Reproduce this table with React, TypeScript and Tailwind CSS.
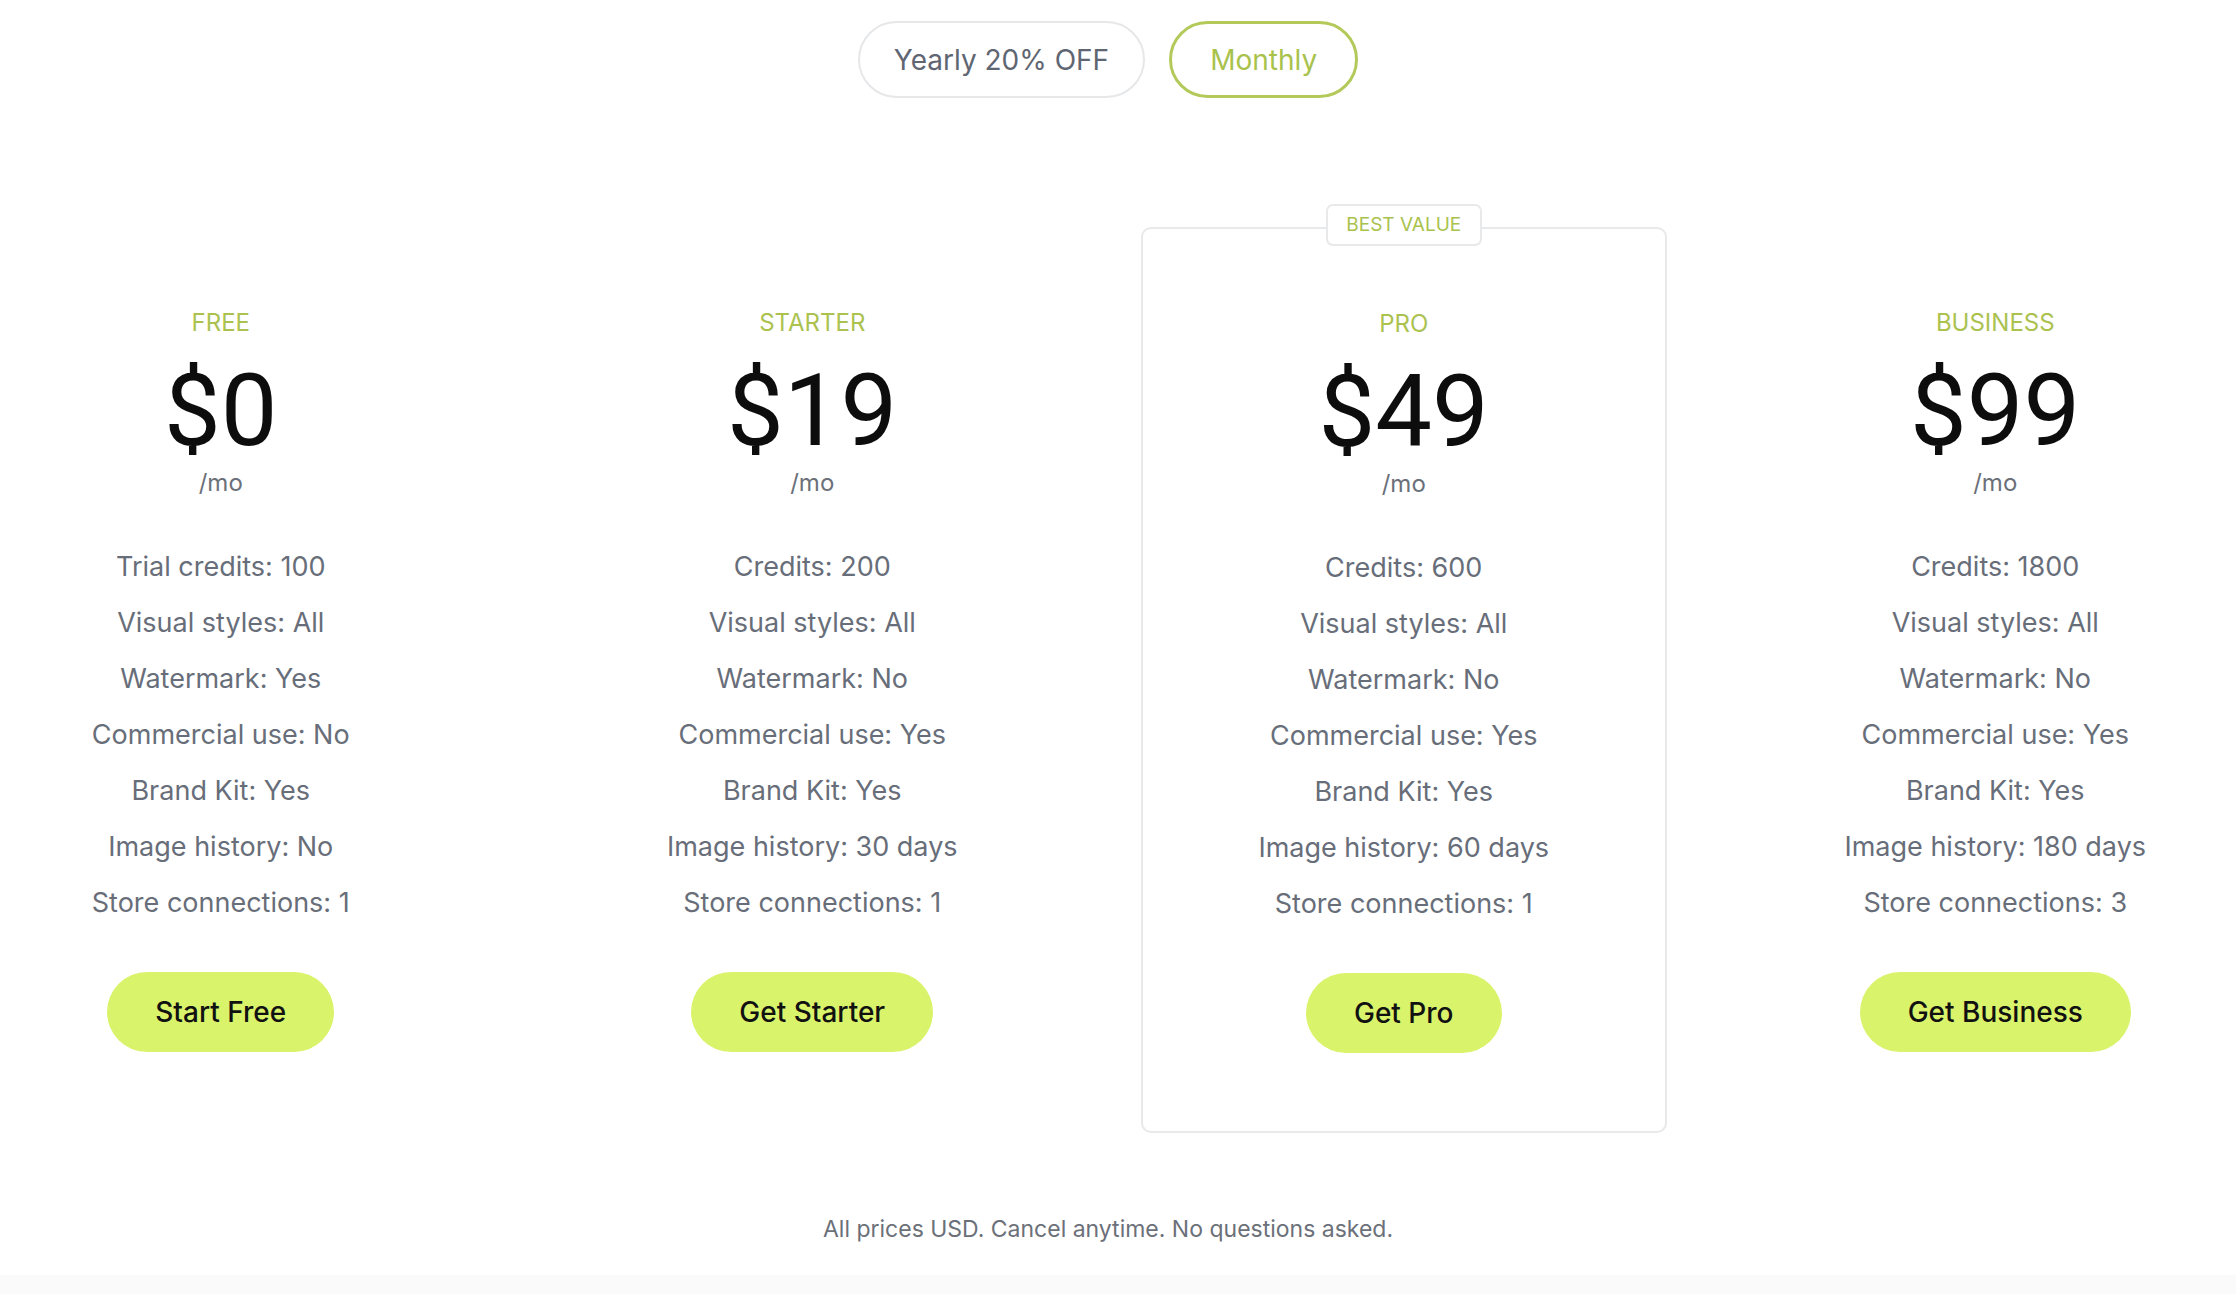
const plans = [
    {
        name: "FREE",
        price: "$0",
        cta: "Start Free",
        features: ["Trial credits: 100", "Visual styles: All", "Watermark: Yes", "Commercial use: No", "Brand Kit: Yes", "Image history: No", "Store connections: 1"],
    },
    {
        name: "STARTER",
        price: "$19",
        cta: "Get Starter",
        features: ["Credits: 200", "Visual styles: All", "Watermark: No", "Commercial use: Yes", "Brand Kit: Yes", "Image history: 30 days", "Store connections: 1"],
    },
    {
        name: "PRO",
        price: "$49",
        cta: "Get Pro",
        best: true,
        features: ["Credits: 600", "Visual styles: All", "Watermark: No", "Commercial use: Yes", "Brand Kit: Yes", "Image history: 60 days", "Store connections: 1"],
    },
    {
        name: "BUSINESS",
        price: "$99",
        cta: "Get Business",
        features: ["Credits: 1800", "Visual styles: All", "Watermark: No", "Commercial use: Yes", "Brand Kit: Yes", "Image history: 180 days", "Store connections: 3"],
    },
];

export default function App() {
    return (
        <div className="min-h-screen w-[2236px] bg-white font-['Inter',sans-serif]">
            <div className="mr-[20px] flex flex-col items-center">
                <div className="mt-[21px] flex items-center gap-[24px]">
                    <button className="h-[77px] rounded-full border-2 border-[#e6e7e9] px-[34px] text-[28px] text-[#5f6672]">
                        Yearly 20% OFF
                    </button>
                    <button className="h-[77px] rounded-full border-[3px] border-[#b3ca5b] px-[38px] text-[28px] text-[#a9c24c]">
                        Monthly
                    </button>
                </div>

                <div className="mt-[129px] grid w-full grid-cols-4 gap-x-[150px]">
                    {plans.map((p) => (
                        <PlanCard key={p.name} plan={p} />
                    ))}
                </div>

                <p className="mt-[80px] text-[23px] leading-[32px] text-[#6b7079]">
                    All prices USD. Cancel anytime. No questions asked.
                </p>
            </div>
            <div className="mt-[30px] h-[40px] bg-[#fafafa]" />
        </div>
    );
}

function PlanCard({ plan }: { plan: (typeof plans)[number] }) {
    return (
        <div
            className={
                plan.best
                    ? "relative -mx-[42px] flex flex-col items-center rounded-[10px] border-2 border-[#e8e9eb] pt-[79px] pb-[78px]"
                    : "relative flex flex-col items-center border-2 border-transparent pt-[78px] pb-[79px]"
            }
        >
            {plan.best && (
                <span className="absolute left-1/2 top-[-4px] flex h-[42px] w-[156px] -translate-x-1/2 -translate-y-1/2 items-center justify-center rounded-[7px] border-2 border-[#e8e9eb] bg-white text-[19px] text-[#a9c24c]">
                    BEST VALUE
                </span>
            )}
            <h3 className="text-[24px] leading-[32px] text-[#abc24f]">{plan.name}</h3>
            <div className="mt-[22px] font-['Roboto',sans-serif] text-[101px] leading-[100px] text-[#0d0d0d]">{plan.price}</div>
            <div className="mt-[6px] text-[24px] leading-[32px] text-[#6b7079]">/mo</div>
            <ul className="mt-[40px] flex flex-col items-center">
                {plan.features.map((f) => (
                    <li key={f} className="text-[27px] leading-[56px] text-[#686e79]">
                        {f}
                    </li>
                ))}
            </ul>
            <button className="mt-[41px] h-[80px] rounded-full bg-[#d9f36b] px-[48px] text-[28px] font-medium text-[#111]">
                {plan.cta}
            </button>
        </div>
    );
}
